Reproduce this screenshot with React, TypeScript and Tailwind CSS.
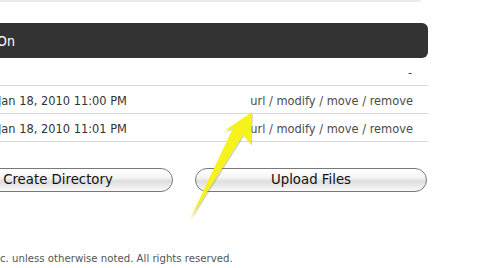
import React from 'react';

const rows = [
  { date: '', actions: false },
  { date: 'Jan 18, 2010 11:00 PM', actions: true },
  { date: 'Jan 18, 2010 11:01 PM', actions: true },
];

const btn =
  "h-[24px] rounded-full border border-[#787878] bg-[linear-gradient(to_bottom,#ffffff_0%,#f4f4f4_40%,#dedede_55%,#ececec_80%,#fafafa_100%)] font-['DejaVu_Sans',sans-serif] text-[13.3px] text-[#111] shadow-[inset_0_1px_0_#fff]";

export default function App() {
  return (
    <div className="relative h-[268px] w-[500px] overflow-hidden bg-white font-['DejaVu_Sans_Condensed','DejaVu_Sans',sans-serif]">
      {/* bottom edge of the panel above */}
      <div className="h-[2px] w-[421px] rounded-br-[4px] bg-[#e8ebe3]" />

      <div className="ml-[-57px] mt-[21px] w-[485px]">
        {/* table header */}
        <div className="flex h-[35px] items-center rounded-r-[6px] bg-[#333333] pt-[2px] text-[14px] text-white">
          <div className="flex w-[72px] justify-end whitespace-nowrap">Modified On</div>
        </div>

        {/* files */}
        {rows.map((r, i) => (
          <div
            key={i}
            className="flex h-[28px] items-center justify-between border-b border-[#d8d8d8] pl-[55px] pr-[15px] pt-[2px] text-[12.7px]"
          >
            <span className="text-[#333]">{r.date}</span>
            {r.actions ? (
              <span className="text-[#4b4b4b]">
                <a>url</a> / <a>modify</a> / <a>move</a> / <a>remove</a>
              </span>
            ) : (
              <span className="pr-[1px] text-[#444]">-</span>
            )}
          </div>
        ))}

        {/* actions */}
        <div className="mt-[26px] flex gap-[22px]">
          <button className={`${btn} w-[230px]`}>Create Directory</button>
          <button className={`${btn} w-[232px]`}>Upload Files</button>
        </div>
      </div>

      <div className="mt-[59px] flex whitespace-nowrap text-[11.3px] text-[#555]">
        <div className="flex w-0 justify-end">Copyright © 2010 Example, In</div>
        <div>c. unless otherwise noted. All rights reserved.</div>
      </div>

      {/* annotation arrow */}
      <svg className="pointer-events-none absolute left-0 top-0" width="500" height="268" viewBox="0 0 500 268">
        <polygon
          points="252,112 251,144 243,135 190,219 233,128 224,131"
          fill="#8a8a50"
          opacity="0.35"
          transform="translate(1,1.5)"
        />
        <polygon points="252,112 251,144 243,135 190,219 233,128 224,131" fill="#f6f21c" />
      </svg>
    </div>
  );
}
